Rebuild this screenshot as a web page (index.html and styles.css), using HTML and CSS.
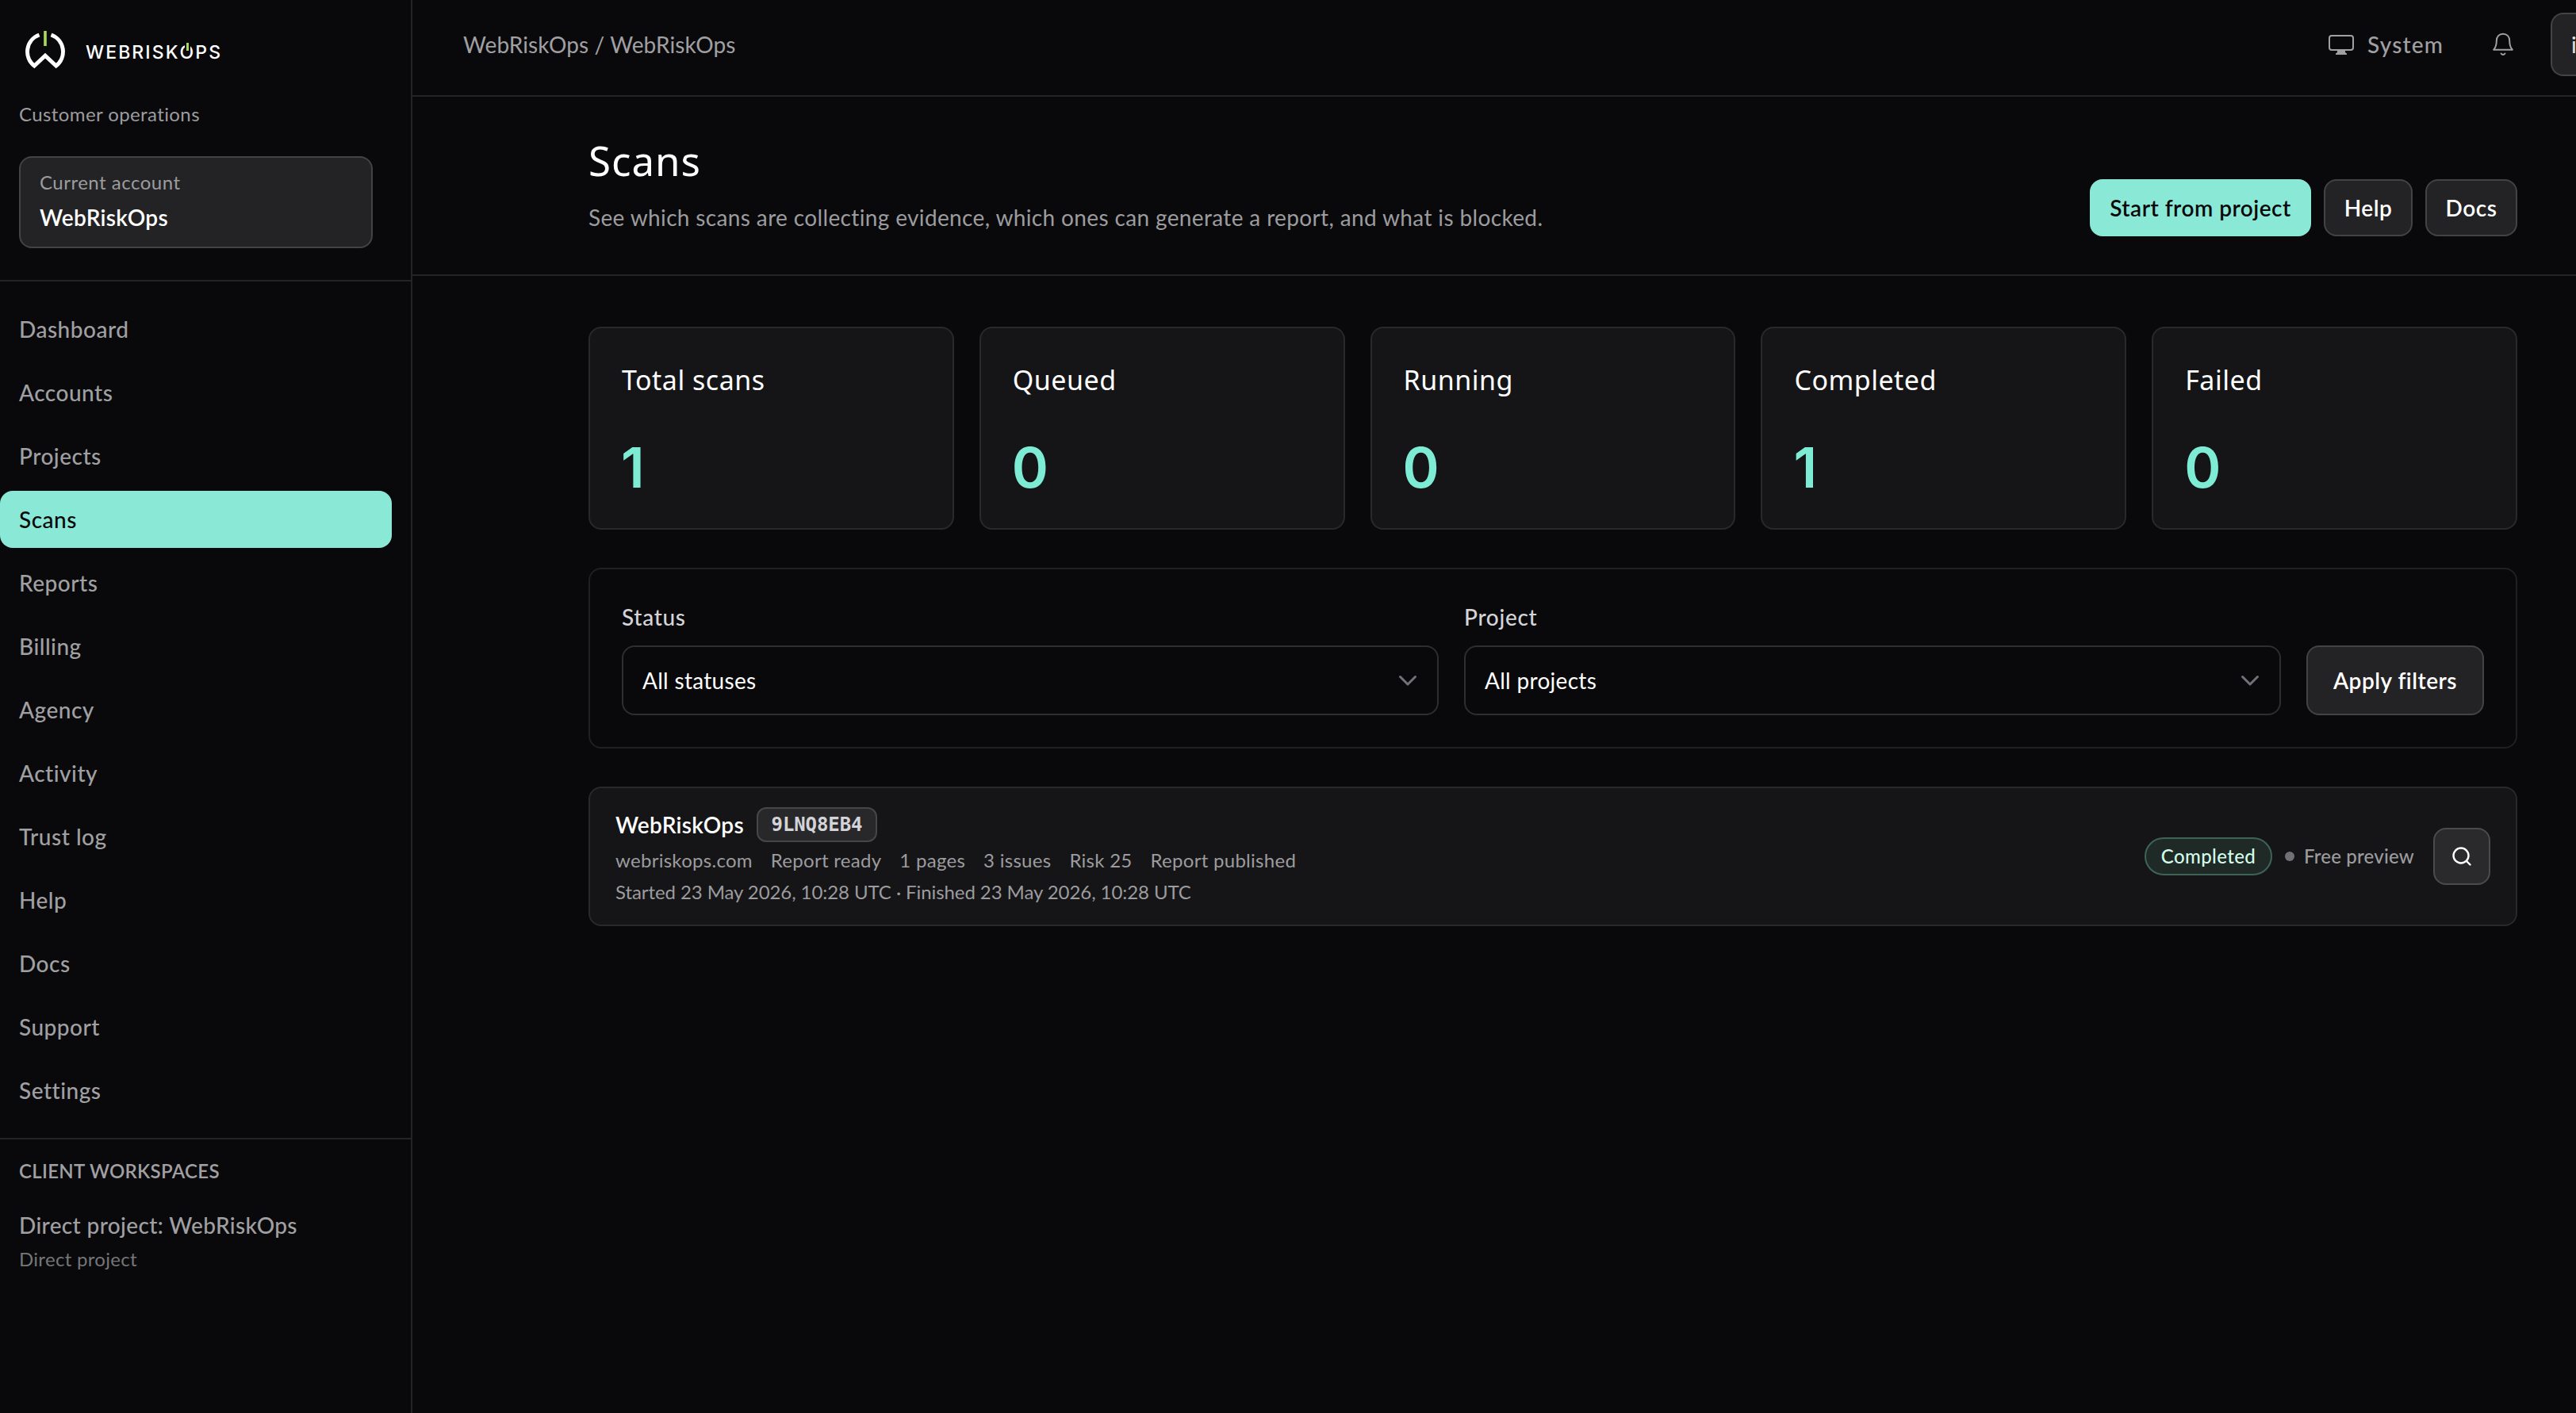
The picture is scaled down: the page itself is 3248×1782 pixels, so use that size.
FILE: index.html
```
<!DOCTYPE html>
<html lang="en">
<head>
    <meta charset="UTF-8">
    <meta name="viewport" content="width=device-width, initial-scale=1.0">
    <title>Scans - WebRiskOps</title>
    <link rel="stylesheet" href="styles.css">
</head>
<body>

<aside class="sidebar">
    <div class="sidebar-head">
        <div class="brand">
            <svg class="brand-mark" viewBox="0 0 50 48" fill="none">
                <path d="M17.5 5A22.5 22.5 0 0 0 11.3 44L25 31.2L38.7 44A22.5 22.5 0 0 0 32.5 5" stroke="#fff" stroke-width="5"/>
                <rect x="23.2" y="0" width="3.6" height="19" fill="#a9d85e"/>
            </svg>
            <span class="brand-name">WEBRISK<span class="brand-o">O</span>PS</span>
        </div>
        <p class="tagline">Customer operations</p>
        <div class="account">
            <span class="account-label">Current account</span>
            <strong class="account-name">WebRiskOps</strong>
        </div>
    </div>
    <nav class="nav">
        <a class="nav-link">Dashboard</a>
        <a class="nav-link">Accounts</a>
        <a class="nav-link">Projects</a>
        <a class="nav-link active">Scans</a>
        <a class="nav-link">Reports</a>
        <a class="nav-link">Billing</a>
        <a class="nav-link">Agency</a>
        <a class="nav-link">Activity</a>
        <a class="nav-link">Trust log</a>
        <a class="nav-link">Help</a>
        <a class="nav-link">Docs</a>
        <a class="nav-link">Support</a>
        <a class="nav-link">Settings</a>
    </nav>
    <div class="workspaces">
        <h2 class="workspaces-title">CLIENT WORKSPACES</h2>
        <p class="workspace-name">Direct project: WebRiskOps</p>
        <p class="workspace-type">Direct project</p>
    </div>
</aside>

<div class="page">
    <header class="topbar">
        <span class="breadcrumb">WebRiskOps / WebRiskOps</span>
        <div class="topbar-right">
            <svg class="icon-monitor" viewBox="0 0 36 32" fill="none">
                <rect x="3" y="5" width="30" height="18" rx="3" stroke="currentColor" stroke-width="2"/>
                <path d="M13 23h10v3l2 1.400v1.600H11v-1.600l2-1.400z" fill="currentColor"/>
            </svg>
            <span class="theme">System</span>
            <svg class="icon-bell" viewBox="0 0 32 32" fill="none" stroke="currentColor" stroke-width="2" stroke-linejoin="round" stroke-linecap="round">
                <path d="M4.200 22.700C6.800 19.800 7.800 16.500 7.800 11.500C7.800 6.200 11 2.800 16 2.800S24.200 6.200 24.200 11.500C24.200 16.500 25.200 19.800 27.800 22.700Z"/>
                <path d="M13.600 27.600q2.400 2.800 4.800 0"/>
            </svg>
            <button class="user">i</button>
        </div>
    </header>

    <section class="hero">
        <div>
            <h1>Scans</h1>
            <p class="lead">See which scans are collecting evidence, which ones can generate a report, and what is blocked.</p>
        </div>
        <div class="actions">
            <button class="btn btn-primary">Start from project</button>
            <button class="btn btn-help">Help</button>
            <button class="btn btn-docs">Docs</button>
        </div>
    </section>

    <main class="content">
        <div class="stats">
            <div class="stat"><h3>Total scans</h3><p class="stat-value">1</p></div>
            <div class="stat"><h3>Queued</h3><p class="stat-value">0</p></div>
            <div class="stat"><h3>Running</h3><p class="stat-value">0</p></div>
            <div class="stat"><h3>Completed</h3><p class="stat-value">1</p></div>
            <div class="stat"><h3>Failed</h3><p class="stat-value">0</p></div>
        </div>

        <div class="filters">
            <div class="field">
                <span class="field-label">Status</span>
                <div class="select">
                    <span>All statuses</span>
                    <svg class="chevron" viewBox="0 0 24 16" fill="none"><path d="M2.500 3.500L12 13L21.500 3.500" stroke="#71717a" stroke-width="3" stroke-linecap="round" stroke-linejoin="round"/></svg>
                </div>
            </div>
            <div class="field">
                <span class="field-label">Project</span>
                <div class="select">
                    <span>All projects</span>
                    <svg class="chevron" viewBox="0 0 24 16" fill="none"><path d="M2.500 3.500L12 13L21.500 3.500" stroke="#71717a" stroke-width="3" stroke-linecap="round" stroke-linejoin="round"/></svg>
                </div>
            </div>
            <button class="btn btn-apply">Apply filters</button>
        </div>

        <div class="scan">
            <div>
                <div class="scan-title">
                    <strong>WebRiskOps</strong>
                    <code class="scan-id">9LNQ8EB4</code>
                </div>
                <div class="scan-meta">
                    <span>webriskops.com</span>
                    <span>Report ready</span>
                    <span>1 pages</span>
                    <span>3 issues</span>
                    <span>Risk 25</span>
                    <span>Report published</span>
                </div>
                <p class="scan-time">Started 23 May 2026, 10:28 UTC · Finished 23 May 2026, 10:28 UTC</p>
            </div>
            <div class="scan-side">
                <span class="pill">Completed</span>
                <span class="dot"></span>
                <span class="plan">Free preview</span>
                <button class="btn btn-icon">
                    <svg class="icon-search" viewBox="0 0 24 24" fill="none" stroke="currentColor" stroke-width="2.400" stroke-linecap="round">
                        <circle cx="11" cy="11" r="9.500"/>
                        <path d="M18 18L22.500 22.500"/>
                    </svg>
                </button>
            </div>
        </div>
    </main>
</div>

</body>
</html>
```
FILE: styles.css
```
* {
    box-sizing: border-box;
    margin: 0;
    padding: 0;
}
body {
    display: flex;
    min-height: 100vh;
    background-color: #09090b;
    color: #fff;
    font-family: Lato, sans-serif;
    font-size: 28px;
    line-height: 40px;
    letter-spacing: 0.3px;
    overflow: hidden;
}
button {
    font: inherit;
    letter-spacing: inherit;
}
svg {
    display: block;
    flex-shrink: 0;
}

/* Sidebar */
.sidebar {
    width: 520px;
    flex-shrink: 0;
    border-right: 2px solid #242426;
}
.sidebar-head {
    padding: 39px 48px 40px 24px;
    border-bottom: 2px solid #242426;
}
.brand {
    display: flex;
    align-items: center;
    height: 48px;
    padding-left: 8px;
    gap: 26px;
}
.brand-mark {
    width: 50px;
    height: 48px;
}
.brand-name {
    font-family: Inter, sans-serif;
    font-size: 23px;
    font-weight: 500;
    letter-spacing: 2.1px;
    padding-top: 5px;
}
.brand-o {
    position: relative;
}
/* power-button notch in the O */
.brand-o::before {
    content: "";
    position: absolute;
    left: 6px;
    top: 2px;
    width: 3px;
    height: 10px;
    background-color: #a9d85e;
    border: solid #09090b;
    border-width: 0 2px;
    box-sizing: content-box;
}
.tagline {
    margin: 37px 0 33px;
    color: #9c9c9f;
    font-size: 24px;
    letter-spacing: 0.4px;
}
.account {
    display: flex;
    flex-direction: column;
    gap: 8px;
    height: 116px;
    padding: 15px 24px 0;
    background-color: #232325;
    border: 2px solid #434345;
    border-radius: 16px;
}
.account-label {
    color: #9c9c9f;
    font-size: 24px;
    line-height: 32px;
    letter-spacing: 0.5px;
}
.account-name {
    font-weight: 600;
}
.nav {
    display: flex;
    flex-direction: column;
    gap: 8px;
    padding: 24px 24px 24px 0;
}
.nav-link {
    height: 72px;
    padding: 16px 24px;
    border-radius: 16px;
    color: #a0a0a3;
    font-weight: 500;
    letter-spacing: 0.5px;
}
.nav-link.active {
    background-color: #8ae9d6;
    color: #09090b;
}
.workspaces {
    padding: 24px 24px;
    border-top: 2px solid #242426;
    color: #a0a0a3;
}
.workspaces-title {
    font-size: 24px;
    font-weight: 600;
    line-height: 32px;
}
.workspace-name {
    margin: 32px 0 7px;
    font-weight: 500;
    letter-spacing: 0.36px;
}
.workspace-type {
    color: #767678;
    font-size: 24px;
    line-height: 32px;
}

/* Top bar and page header */
.page {
    flex: 1;
    min-width: 0;
}
.topbar {
    display: flex;
    justify-content: space-between;
    height: 122px;
    padding: 16px 0 24px 64px;
    border-bottom: 2px solid #242426;
    color: #a0a0a3;
}
.breadcrumb {
    line-height: 80px;
    letter-spacing: 0.1px;
}
.topbar-right {
    display: flex;
    align-items: center;
}
.icon-monitor {
    width: 36px;
    height: 32px;
}
.theme {
    width: 155px;
    margin-left: 15px;
    font-weight: 500;
    letter-spacing: 1.2px;
}
.icon-bell {
    width: 32px;
    height: 32px;
}
/* cut off by the right edge of the window */
.user {
    width: 32px;
    height: 80px;
    margin-left: 44px;
    padding-left: 24px;
    text-align: left;
    color: #e4e4e7;
    background-color: #232325;
    border: 2px solid #434345;
    border-right: none;
    border-radius: 16px 0 0 16px;
    overflow: hidden;
}
.hero {
    display: flex;
    justify-content: space-between;
    align-items: flex-end;
    height: 226px;
    padding: 48px 74px 48px 222px;
    border-bottom: 2px solid #242426;
}
h1 {
    font-family: "Noto Sans", sans-serif;
    font-size: 51px;
    font-weight: 450;
    line-height: 62px;
    letter-spacing: 1px;
}
.lead {
    margin: 21px 0 4px;
    color: #9c9c9f;
    letter-spacing: 0.36px;
}
.actions {
    display: flex;
    gap: 16px;
}
.btn {
    height: 72px;
    color: #fff;
    font-weight: 600;
    letter-spacing: 0.5px;
    background-color: #232325;
    border: 2px solid #434345;
    border-radius: 16px;
}
.btn-primary {
    width: 279px;
    color: #09090b;
    background-color: #8ae9d6;
    border-color: #8ae9d6;
}
.btn-help {
    width: 112px;
}
.btn-docs {
    width: 116px;
}

/* Content */
.content {
    display: flex;
    flex-direction: column;
    gap: 48px;
    padding: 64px 74px 64px 222px;
}
.stats {
    display: grid;
    grid-template-columns: repeat(5, 1fr);
    gap: 32px;
}
.stat {
    height: 256px;
    padding: 41px 40px 0;
    background-color: #151517;
    border: 2px solid #29292b;
    border-radius: 16px;
}
.stat h3 {
    font-family: "Noto Sans", sans-serif;
    font-size: 34px;
    font-weight: 450;
    line-height: 48px;
    letter-spacing: 0.5px;
}
.stat-value {
    margin: 51px 0 0 -1px;
    color: #7eecd4;
    font-family: Inter, sans-serif;
    font-size: 70px;
    font-weight: 600;
    line-height: 72px;
}
.filters {
    display: grid;
    grid-template-columns: 1fr 1fr 224px;
    align-items: end;
    gap: 32px;
    padding: 39px 40px 40px;
    border: 2px solid #202022;
    border-radius: 16px;
}
.field-label {
    display: block;
    padding-top: 1px;
    margin-bottom: 16px;
    color: #d4d4d8;
    font-weight: 500;
    letter-spacing: 0.7px;
}
.select {
    display: flex;
    justify-content: space-between;
    align-items: center;
    height: 88px;
    padding: 0 25px 0 24px;
    border: 2px solid #2e2e30;
    border-radius: 16px;
}
.chevron {
    width: 24px;
    height: 16px;
}
.btn-apply {
    height: 88px;
}
.scan {
    display: flex;
    justify-content: space-between;
    height: 176px;
    padding: 24px 32px;
    background-color: #151517;
    border: 2px solid #29292b;
    border-radius: 16px;
}
.scan-title {
    display: flex;
    align-items: center;
    gap: 16px;
    height: 44px;
    margin-bottom: 3px;
}
.scan-title strong {
    font-weight: 600;
}
.scan-id {
    width: 152px;
    height: 44px;
    color: #d4d4d8;
    font-family: "DejaVu Sans Mono", monospace;
    font-size: 24px;
    font-weight: bold;
    line-height: 40px;
    letter-spacing: -0.1px;
    text-align: center;
    background-color: #28282a;
    border: 2px solid #464648;
    border-radius: 12px;
}
.scan-meta {
    display: flex;
    gap: 23px;
    color: #9c9c9f;
    font-size: 24px;
    letter-spacing: 0.28px;
}
.scan-time {
    color: #9c9c9f;
    font-size: 24px;
    letter-spacing: -0.08px;
}
.scan-side {
    display: flex;
    align-items: center;
    font-size: 24px;
}
.pill {
    width: 161px;
    height: 48px;
    margin-right: 16px;
    color: #d3fbe9;
    font-weight: 500;
    letter-spacing: 0.4px;
    line-height: 43px;
    text-align: center;
    background-color: #1f2926;
    border: 2px solid #3f6357;
    border-radius: 24px;
}
.dot {
    width: 12px;
    height: 12px;
    margin-right: 12px;
    background-color: #717175;
    border-radius: 50%;
}
.plan {
    width: 163px;
    color: #9c9c9f;
    font-weight: 500;
    letter-spacing: 0.2px;
}
.btn-icon {
    display: flex;
    justify-content: center;
    align-items: center;
    width: 72px;
    background-color: #2a2a2c;
    border-color: #4b4b4d;
}
.icon-search {
    width: 24px;
    height: 24px;
}
```
